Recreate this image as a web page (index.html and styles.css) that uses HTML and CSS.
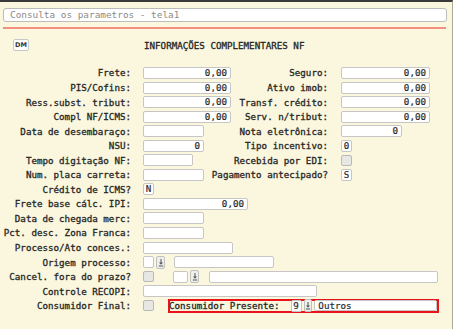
FILE: index.html
```html
<!DOCTYPE html>
<html lang="pt">
<head>
<meta charset="utf-8">
<title>Consulta os parametros - tela1</title>
<link rel="stylesheet" href="styles.css">
</head>
<body>
<div class="screen">
  <div class="titlebox">Consulta os parametros - tela1</div>
  <div class="redline"></div>
  <div class="header">
    <span class="dm">DM</span>
    <span class="heading">INFORMAÇÕES COMPLEMENTARES NF</span>
  </div>
  <div class="form">
    <div class="row">
      <span class="l1">Frete:</span>
      <span class="f1"><span class="box w88 num">0,00</span></span>
      <span class="l2">Seguro:</span>
      <span class="f2"><span class="box w89 num">0,00</span></span>
    </div>
    <div class="row">
      <span class="l1">PIS/Cofins:</span>
      <span class="f1"><span class="box w88 num">0,00</span></span>
      <span class="l2">Ativo imob:</span>
      <span class="f2"><span class="box w89 num">0,00</span></span>
    </div>
    <div class="row">
      <span class="l1">Ress.subst. tribut:</span>
      <span class="f1"><span class="box w88 num">0,00</span></span>
      <span class="l2">Transf. crédito:</span>
      <span class="f2"><span class="box w89 num">0,00</span></span>
    </div>
    <div class="row">
      <span class="l1">Compl NF/ICMS:</span>
      <span class="f1"><span class="box w88 num">0,00</span></span>
      <span class="l2">Serv. n/tribut:</span>
      <span class="f2"><span class="box w89 num">0,00</span></span>
    </div>
    <div class="row">
      <span class="l1">Data de desembaraço:</span>
      <span class="f1"><span class="box w61"></span></span>
      <span class="l2">Nota eletrônica:</span>
      <span class="f2"><span class="box w61 num">0</span></span>
    </div>
    <div class="row">
      <span class="l1">NSU:</span>
      <span class="f1"><span class="box w61 num">0</span></span>
      <span class="l2">Tipo incentivo:</span>
      <span class="f2"><span class="box w10">0</span></span>
    </div>
    <div class="row">
      <span class="l1">Tempo digitação NF:</span>
      <span class="f1"><span class="box w50"></span></span>
      <span class="l2">Recebida por EDI:</span>
      <span class="f2"><span class="check"></span></span>
    </div>
    <div class="row">
      <span class="l1">Num. placa carreta:</span>
      <span class="f1"><span class="box w61"></span></span>
      <span class="l2">Pagamento antecipado?</span>
      <span class="f2"><span class="box w10">S</span></span>
    </div>
    <div class="row">
      <span class="l1">Crédito de ICMS?</span>
      <span class="f1"><span class="box w10">N</span></span>
    </div>
    <div class="row">
      <span class="l1">Frete base cálc. IPI:</span>
      <span class="f1"><span class="box w105 num">0,00</span></span>
    </div>
    <div class="row">
      <span class="l1">Data de chegada merc:</span>
      <span class="f1"><span class="box w61"></span></span>
    </div>
    <div class="row">
      <span class="l1">Pct. desc. Zona Franca:</span>
      <span class="f1"><span class="box w61"></span></span>
    </div>
    <div class="row">
      <span class="l1">Processo/Ato conces.:</span>
      <span class="f1"><span class="box w90"></span></span>
    </div>
    <div class="row">
      <span class="l1">Origem processo:</span>
      <span class="f1">
        <span class="box w10"></span>
        <span class="btn"><svg viewBox="0 0 6 9" width="6" height="9"><path d="M3 1V5.2" stroke="#555" stroke-width="1" fill="none"/><path d="M1 4.6L3 6.8L5 4.6Z" fill="#555"/><path d="M0.8 8H5.2" stroke="#555" stroke-width="1"/></svg></span>
        <span class="box w100 gap9"></span>
      </span>
    </div>
    <div class="row">
      <span class="l1">Cancel. fora do prazo?</span>
      <span class="f1">
        <span class="check"></span>
        <span class="box w15 gap19"></span>
        <span class="btn"><svg viewBox="0 0 6 9" width="6" height="9"><path d="M3 1V5.2" stroke="#555" stroke-width="1" fill="none"/><path d="M1 4.6L3 6.8L5 4.6Z" fill="#555"/><path d="M0.8 8H5.2" stroke="#555" stroke-width="1"/></svg></span>
        <span class="box w229 gap10"></span>
      </span>
    </div>
    <div class="row">
      <span class="l1">Controle RECOPI:</span>
      <span class="f1"><span class="box w174"></span></span>
    </div>
    <div class="row">
      <span class="l1">Consumidor Final:</span>
      <span class="f1">
        <span class="check"></span>
        <span class="redbox">
          <span class="inlabel">Consumidor Presente:</span>
          <span class="box w10">9</span>
          <span class="btn"><svg viewBox="0 0 6 9" width="6" height="9"><path d="M3 1V5.2" stroke="#555" stroke-width="1" fill="none"/><path d="M1 4.6L3 6.8L5 4.6Z" fill="#555"/><path d="M0.8 8H5.2" stroke="#555" stroke-width="1"/></svg></span>
          <span class="box outros">Outros</span>
        </span>
      </span>
    </div>
  </div>
</div>
</body>
</html>
```

FILE: styles.css
```css
html, body {
  margin: 0;
  padding: 0;
}
body {
  background: #faf7de;
  font-family: "DejaVu Sans Mono", "Liberation Mono", monospace;
  font-size: 9.2px;
  color: #262626;
}
.screen {
  box-sizing: border-box;
  width: 453px;
  height: 329px;
  border-top: 2px solid #3a3a3a;
  border-right: 1px solid #a9a79a;
  overflow: hidden;
}
.titlebox {
  box-sizing: border-box;
  margin: 6px 0 0 3px;
  width: 444px;
  height: 14px;
  border: 1.5px solid #bcbcbc;
  border-radius: 3px;
  background: #ffffff;
  color: #8a8a8a;
  font-size: 9.4px;
  line-height: 11px;
  padding-left: 6px;
}
.redline {
  margin: 5px 0 0 3px;
  width: 443px;
  height: 2px;
  background: #f29080;
}
.header {
  display: flex;
  align-items: center;
  margin-top: 10px;
  height: 12px;
}
.dm {
  box-sizing: border-box;
  margin-left: 13px;
  width: 16px;
  height: 12px;
  border: 1px solid #c8c8c8;
  border-radius: 2px;
  background: #fdfdfa;
  font-family: "DejaVu Sans", "Liberation Sans", sans-serif;
  font-weight: bold;
  font-size: 6.5px;
  line-height: 10px;
  text-align: center;
  color: #333;
}
.heading {
  margin-left: 115px;
  color: #262626;
  -webkit-text-stroke: 0.3px #262626;
}
.form {
  margin-top: 14.7px;
}
.row {
  display: flex;
  align-items: center;
  height: 14.56px;
  width: 430px;
  white-space: nowrap;
}
.l1 {
  flex: none;
  width: 131px;
  text-align: right;
  -webkit-text-stroke: 0.3px #262626;
}
.f1 {
  flex: none;
  display: flex;
  align-items: center;
  margin-left: 12px;
}
.l2 {
  flex: 1;
  text-align: right;
  -webkit-text-stroke: 0.3px #262626;
}
.f2 {
  flex: none;
  display: flex;
  align-items: center;
  width: 89px;
  margin-left: 13px;
}
.box {
  box-sizing: border-box;
  display: inline-block;
  height: 12px;
  border: 1px solid #c6c6c6;
  border-radius: 2px;
  background: #ffffff;
  line-height: 10px;
  padding: 0 3px;
  color: #2a2a2a;
  overflow: hidden;
  -webkit-text-stroke: 0.2px #2a2a2a;
}
.num { text-align: right; }
.w10 { width: 11px; padding: 0 1px; text-align: center; }
.w15 { width: 15px; }
.w50 { width: 50px; }
.w61 { width: 61px; }
.w88 { width: 88px; }
.w89 { width: 89px; }
.w90 { width: 90px; }
.w100 { width: 100px; }
.w105 { width: 105px; }
.w174 { width: 174px; }
.w229 { width: 229px; }
.gap9 { margin-left: 9px; }
.gap19 { margin-left: 19px; }
.gap10 { margin-left: 10px; }
.check {
  box-sizing: border-box;
  display: inline-block;
  width: 11px;
  height: 11px;
  border: 1px solid #b9b9b9;
  border-radius: 2px;
  background: #e7e7e3;
}
.btn {
  box-sizing: border-box;
  display: inline-flex;
  align-items: center;
  justify-content: center;
  margin-left: 2px;
  width: 9px;
  height: 13px;
  border: 1px solid #c0c0c0;
  border-radius: 2px;
  background: #efefeb;
}
.btn svg { display: block; }
.redbox {
  box-sizing: border-box;
  display: flex;
  align-items: center;
  margin-left: 14px;
  width: 271px;
  height: 14px;
  border: 2px solid #e8141a;
  padding-left: 0;
}
.inlabel {
  -webkit-text-stroke: 0.3px #262626;
  margin-right: 11px;
  margin-left: -1px;
}
.outros {
  width: 125px;
  margin-left: 2px;
  text-align: left;
  height: 11px;
  line-height: 9px;
}
```
